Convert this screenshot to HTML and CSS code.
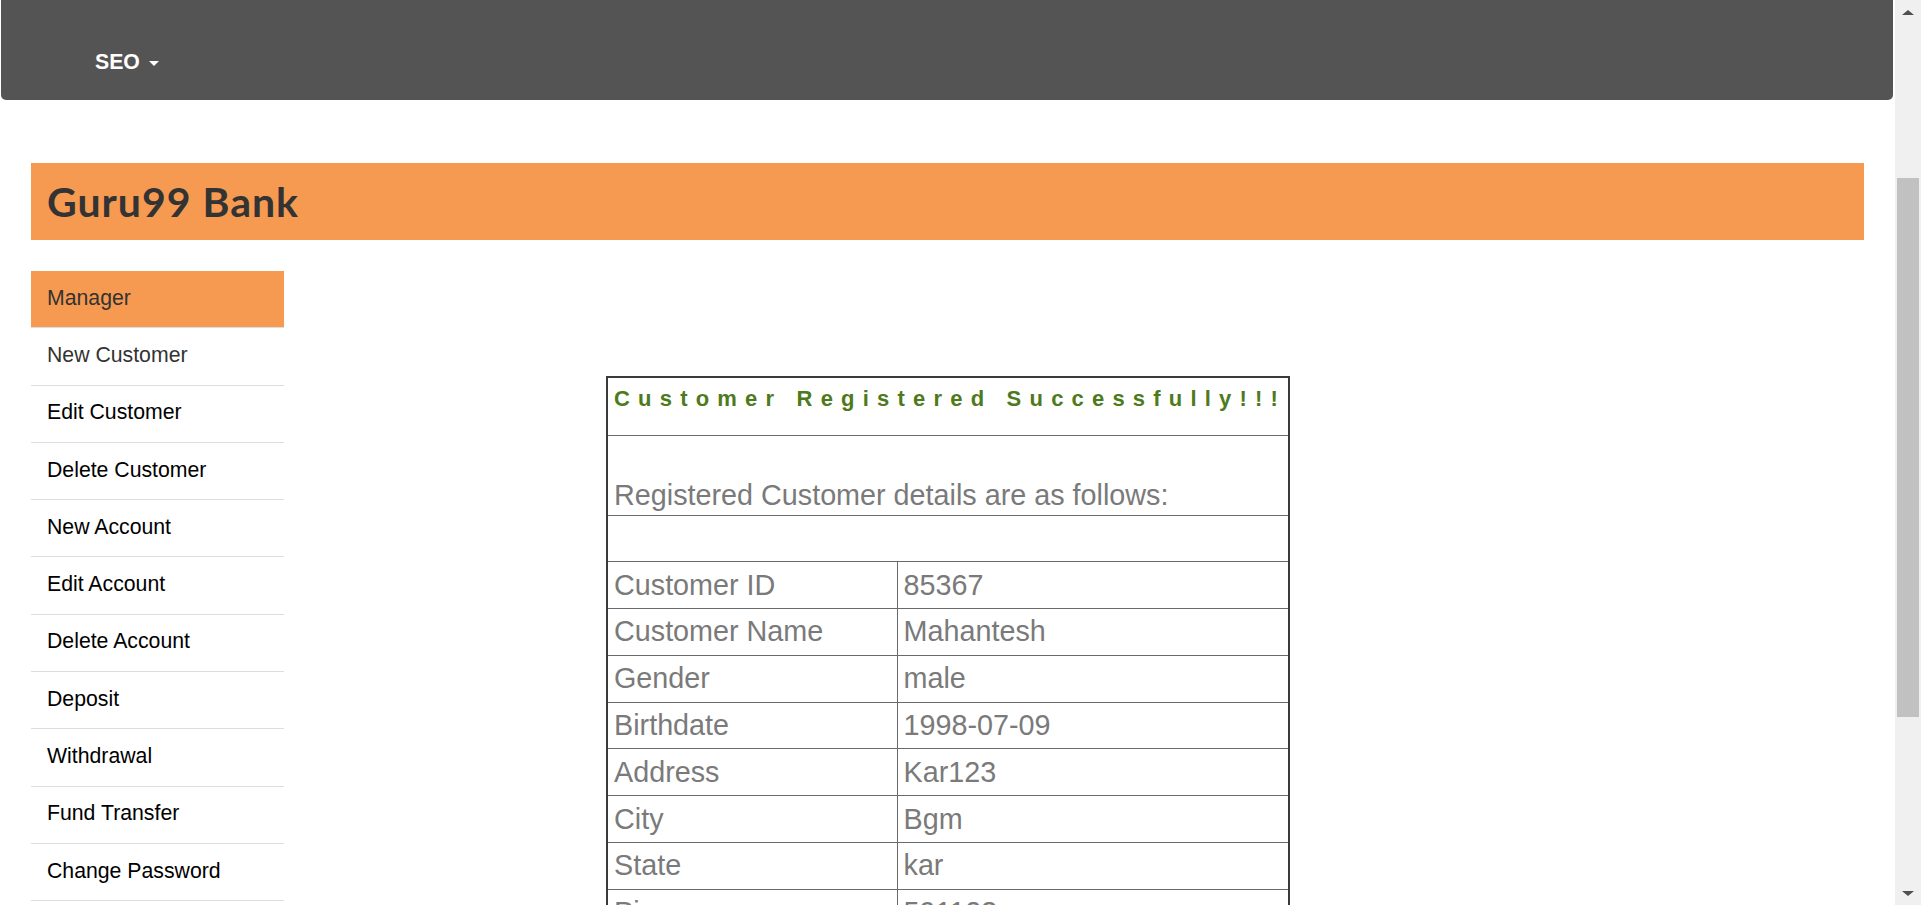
FILE: index.html
```html
<!DOCTYPE html>
<html lang="en">
<head>
<meta charset="utf-8">
<title>Guru99 Bank - Customer Registered</title>
<link rel="stylesheet" href="styles.css">
</head>
<body>
<div class="viewport">
  <div class="page">
    <nav class="navbar">
      <div class="nav-item">SEO <span class="caret"></span></div>
    </nav>
    <header class="banner">
      <h2 class="brand">Guru99 Bank</h2>
    </header>
    <div class="layout">
      <ul class="menu">
        <li class="menu-item active">Manager</li>
        <li class="menu-item visited">New Customer</li>
        <li class="menu-item">Edit Customer</li>
        <li class="menu-item">Delete Customer</li>
        <li class="menu-item">New Account</li>
        <li class="menu-item">Edit Account</li>
        <li class="menu-item">Delete Account</li>
        <li class="menu-item">Deposit</li>
        <li class="menu-item">Withdrawal</li>
        <li class="menu-item">Fund Transfer</li>
        <li class="menu-item">Change Password</li>
      </ul>
      <main class="content">
        <table class="details">
          <colgroup><col class="col-label"><col class="col-value"></colgroup>
          <tr class="row-head"><td colspan="2" class="heading">Customer Registered Successfully!!!</td></tr>
          <tr class="row-intro"><td colspan="2" class="intro">Registered Customer details are as follows:</td></tr>
          <tr class="row-data"><td colspan="2">&nbsp;</td></tr>
          <tr class="row-data"><td>Customer ID</td><td>85367</td></tr>
          <tr class="row-data"><td>Customer Name</td><td>Mahantesh</td></tr>
          <tr class="row-data"><td>Gender</td><td>male</td></tr>
          <tr class="row-data"><td>Birthdate</td><td>1998-07-09</td></tr>
          <tr class="row-data"><td>Address</td><td>Kar123</td></tr>
          <tr class="row-data"><td>City</td><td>Bgm</td></tr>
          <tr class="row-data"><td>State</td><td>kar</td></tr>
          <tr class="row-data"><td>Pin</td><td>591123</td></tr>
        </table>
      </main>
    </div>
  </div>
  <div class="scrollbar">
    <div class="sb-btn"><span class="arrow-up"></span></div>
    <div class="sb-track">
      <div class="sb-thumb"></div>
    </div>
    <div class="sb-btn"><span class="arrow-down"></span></div>
  </div>
</div>
</body>
</html>
```

FILE: styles.css
```css
html, body {
  margin: 0;
  padding: 0;
  background: #fff;
}

body {
  font-family: "Liberation Sans", Arial, sans-serif;
}

.viewport {
  display: flex;
  height: 905px;
  overflow: hidden;
}

.page {
  flex: 1;
  min-width: 0;
  overflow: hidden;
}

/* navbar */
.navbar {
  height: 100px;
  margin: 0 2px 0 1px;
  background: #545454;
  border-radius: 0 0 5px 5px;
  box-sizing: border-box;
  padding: 50px 0 0 94px;
}

.nav-item {
  color: #fff;
  font-weight: bold;
  font-size: 21.25px;
  line-height: 25px;
}

.caret {
  display: inline-block;
  width: 0;
  height: 0;
  margin-left: 3px;
  vertical-align: middle;
  border-top: 5px solid #fff;
  border-left: 5.5px solid transparent;
  border-right: 5.5px solid transparent;
}

/* banner */
.banner {
  margin: 63px 31px 0;
  height: 77px;
  background: #f79a51;
  display: flex;
  align-items: center;
  padding-left: 16px;
}

.brand {
  margin: 0;
  font-family: Lato, "Noto Sans", sans-serif;
  font-weight: 700;
  font-size: 41px;
  line-height: 1;
  color: #333;
  letter-spacing: 1px;
}

/* layout */
.layout {
  display: flex;
  margin-top: 31px;
  padding: 0 31px;
}

.menu {
  list-style: none;
  margin: 0;
  padding: 0;
  width: 253px;
  flex: none;
}

.menu-item {
  height: 57.3px;
  box-sizing: border-box;
  display: flex;
  align-items: center;
  padding: 0 16px 2px;
  border-bottom: 1px solid #ddd;
  font-size: 21.25px;
  color: #000;
}

.menu-item.active {
  background: #f79a51;
  color: #333;
}

.menu-item.visited {
  color: #333;
}

.content {
  flex: 1;
  padding: 105px 0 0 322px;
}

/* table */
.details {
  border-collapse: collapse;
  table-layout: fixed;
  width: 682px;
  border: 2px solid #3a3a3a;
  font-size: 28.75px;
  color: #7a7a7a;
}

.col-label {
  width: 290px;
}

.col-value {
  width: 392px;
}

.details td {
  border: 1px solid #6a6a6a;
  padding: 0 6px;
  line-height: 33px;
  vertical-align: middle;
  white-space: nowrap;
}

.row-head td {
  height: 58px;
  box-sizing: border-box;
  vertical-align: top;
  padding-top: 8px;
}

.details td.heading {
  color: #4e7a1c;
  font-weight: bold;
  font-size: 22px;
  line-height: 25px;
  letter-spacing: 8.2px;
}

.row-intro td {
  height: 80px;
  box-sizing: border-box;
  vertical-align: bottom;
  padding-bottom: 3px;
}

.row-data td {
  height: 46.8px;
  box-sizing: border-box;
}

/* fake browser scrollbar */
.scrollbar {
  width: 26px;
  flex: none;
  background: #f0f0f0;
  display: flex;
  flex-direction: column;
}

.sb-btn {
  height: 26px;
  flex: none;
  display: flex;
  align-items: center;
  justify-content: center;
}

.arrow-up {
  width: 0;
  height: 0;
  border-bottom: 5px solid #505050;
  border-left: 6px solid transparent;
  border-right: 6px solid transparent;
  margin-top: -2px;
}

.arrow-down {
  width: 0;
  height: 0;
  border-top: 5px solid #505050;
  border-left: 6px solid transparent;
  border-right: 6px solid transparent;
  margin-top: 2px;
}

.sb-track {
  flex: 1;
  padding: 152px 2px 0;
}

.sb-thumb {
  height: 539px;
  background: #c1c1c1;
}
```
